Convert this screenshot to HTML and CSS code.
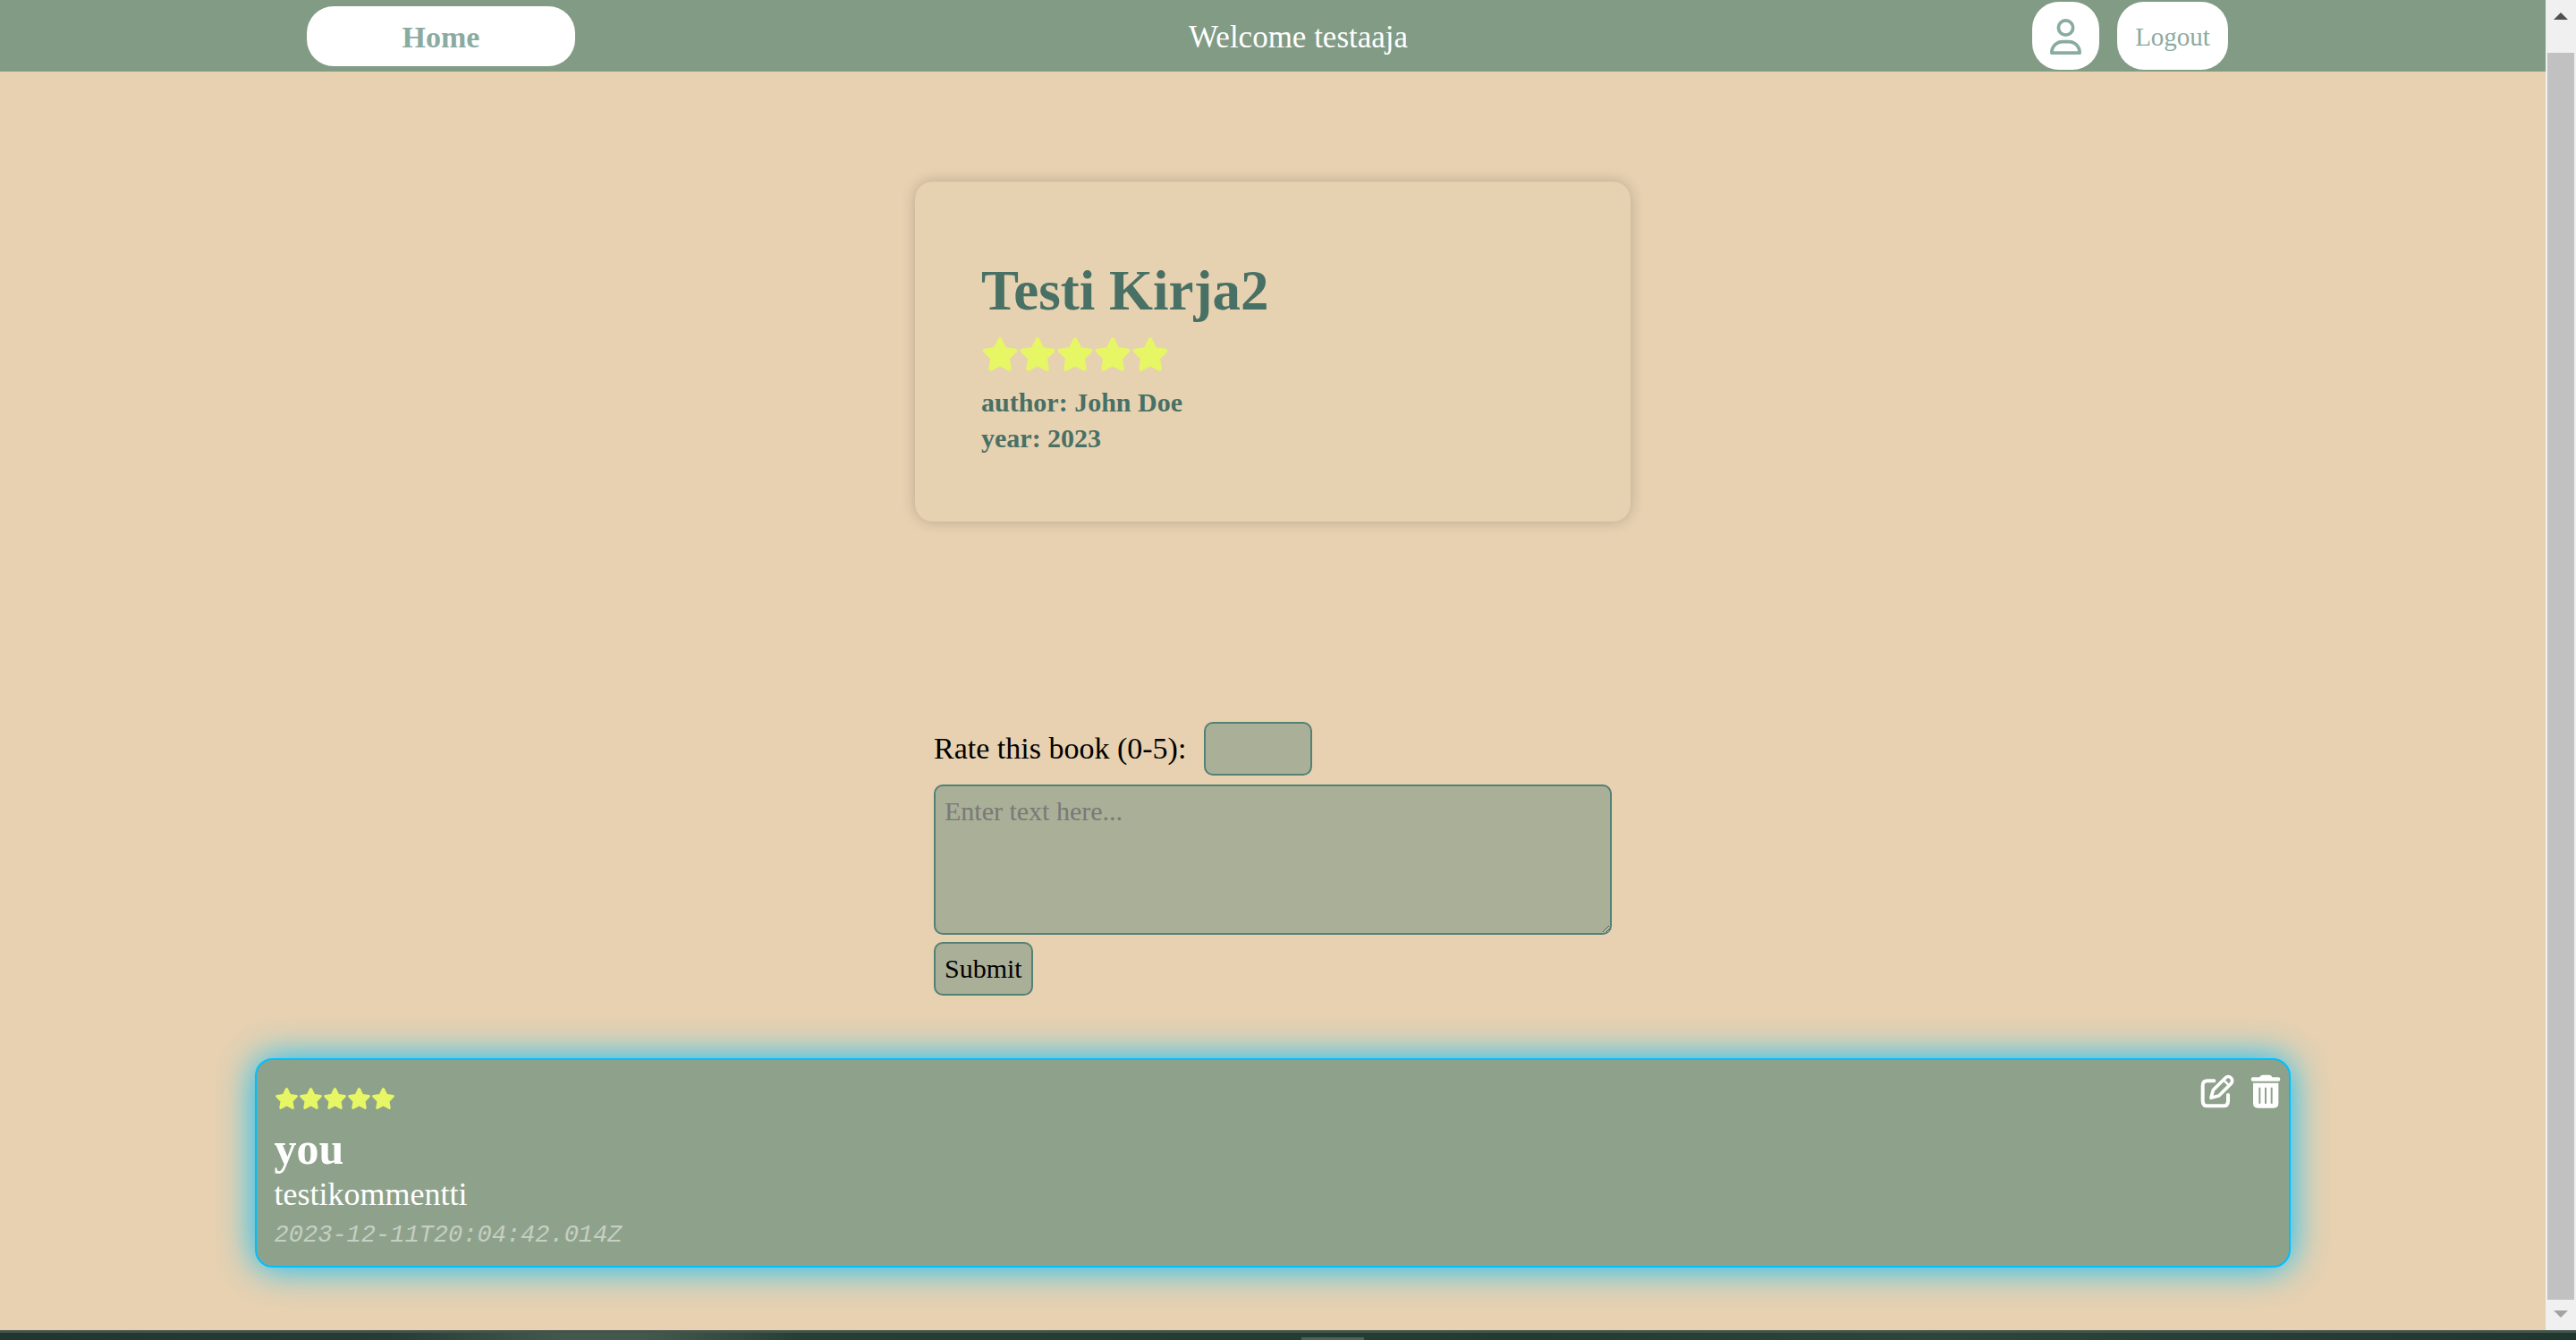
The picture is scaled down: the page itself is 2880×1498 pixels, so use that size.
FILE: index.html
```html
<!DOCTYPE html>
<html lang="en">
<head>
<meta charset="utf-8">
<title>Testi Kirja2</title>
<link rel="stylesheet" href="styles.css">
</head>
<body>
<svg class="sprite" aria-hidden="true">
  <symbol id="star" viewBox="0 0 576 512"><path d="M316.9 18C311.6 7 300.4 0 288.1 0s-23.4 7-28.8 18L195 150.3 51.4 171.5c-12 1.8-22 10.2-25.7 21.7s-.7 24.2 7.9 32.7L137.8 329 113.2 474.7c-2 12 3 24.2 12.9 31.3s23 8 33.8 2.3l128.3-68.5 128.3 68.5c10.8 5.7 23.9 4.9 33.8-2.3s14.9-19.3 12.9-31.3L438.5 329 542.7 225.9c8.6-8.5 11.7-21.2 7.9-32.7s-13.7-19.9-25.7-21.7L381.2 150.3 316.9 18z"/></symbol>
</svg>
<div class="window">
  <div class="page">
    <header class="navbar">
      <button class="nav-button home" type="button">Home</button>
      <span class="welcome">Welcome testaaja</span>
      <div class="nav-actions">
        <button class="nav-button profile" type="button" aria-label="Profile">
          <svg class="profile-icon" viewBox="0 0 448 512"><path d="M304 128a80 80 0 1 0 -160 0 80 80 0 1 0 160 0zM96 128a128 128 0 1 1 256 0A128 128 0 1 1 96 128zM49.3 464H398.7c-8.9-63.3-63.3-112-129-112H178.3c-65.7 0-120.1 48.7-129 112zM0 482.3C0 383.8 79.8 304 178.3 304h91.4C368.2 304 448 383.8 448 482.3c0 16.4-13.3 29.7-29.7 29.7H29.7C13.3 512 0 498.7 0 482.3z"/></svg>
        </button>
        <button class="nav-button logout" type="button">Logout</button>
      </div>
    </header>
    <main class="content">
      <section class="book">
        <h1 class="book-title">Testi Kirja2</h1>
        <div class="stars" role="img" aria-label="5 out of 5">
          <svg><use href="#star"/></svg><svg><use href="#star"/></svg><svg><use href="#star"/></svg><svg><use href="#star"/></svg><svg><use href="#star"/></svg>
        </div>
        <p class="book-info">author: John Doe</p>
        <p class="book-info">year: 2023</p>
      </section>
      <form class="review">
        <div class="rate">
          <label for="rating">Rate this book (0-5):</label>
          <input class="field rating" id="rating" type="number" min="0" max="5">
        </div>
        <textarea class="field review-text" placeholder="Enter text here..." aria-label="Review"></textarea>
        <button class="field submit" type="submit">Submit</button>
      </form>
      <article class="comment">
        <div class="comment-body">
          <div class="stars small" role="img" aria-label="5 out of 5">
            <svg><use href="#star"/></svg><svg><use href="#star"/></svg><svg><use href="#star"/></svg><svg><use href="#star"/></svg><svg><use href="#star"/></svg>
          </div>
          <h2 class="comment-author">you</h2>
          <p class="comment-text">testikommentti</p>
          <time class="comment-date">2023-12-11T20:04:42.014Z</time>
        </div>
        <div class="comment-actions">
          <button class="icon-button" type="button" aria-label="Edit">
            <svg class="edit-icon" viewBox="122 122 114 114" fill="none" stroke="#fff" stroke-linecap="round" stroke-linejoin="round">
              <path stroke-width="12" d="M168 144H146Q130 144 130 160V211Q130 228 147 228H199Q215 228 215 211V191"/>
              <path stroke-width="11" d="M158 201L165 175L206 134A12 12 0 0 1 225 153L184 194Z"/>
              <path stroke-width="8" d="M201 142L218 159"/>
            </svg>
          </button>
          <button class="icon-button" type="button" aria-label="Delete">
            <svg class="trash-icon" viewBox="290 121 102 114" fill="#fff">
              <path d="M298 131H321Q323 123 332 123H352Q361 123 363 131H385Q390 132 390 138Q390 144 384 144H298Q292 144 292 138Q292 131 298 131Z"/>
              <path fill-rule="evenodd" d="M299 150H384V218Q384 234 368 234H315Q299 234 299 218ZM318 165V219H324V165ZM338 165V219H344V165ZM358 165V219H364V165Z"/>
            </svg>
          </button>
        </div>
      </article>
    </main>
  </div>
  <div class="scrollbar" aria-hidden="true">
    <svg class="arrow up" viewBox="0 0 16 8"><path d="M8 0L16 8H0Z"/></svg>
    <div class="thumb"></div>
    <svg class="arrow down" viewBox="0 0 16 8"><path d="M0 0H16L8 8Z"/></svg>
  </div>
</div>
<footer class="taskbar"><span class="taskbar-mark"></span></footer>
</body>
</html>
```
FILE: styles.css
```css
* {
  box-sizing: border-box;
}

body {
  margin: 0;
  min-height: 100vh;
  display: flex;
  flex-direction: column;
  background: #e7d1b1;
  font-family: "Liberation Serif", serif;
}

h1, h2, p {
  margin: 0;
}

button, input, textarea {
  font-family: inherit;
}

.sprite {
  display: none;
}

.window {
  flex: 1;
  display: flex;
}

.page {
  flex: 1;
}

/* Navigation */
.navbar {
  height: 80px;
  display: flex;
  align-items: center;
  justify-content: space-around;
  background: #819b85;
}

.nav-button {
  border: 0;
  border-radius: 30px;
  background: #fff;
  color: #8aaba1;
}

.home {
  width: 300px;
  height: 67px;
  padding: 4px 0 0;
  font-size: 34px;
  font-weight: bold;
}

.welcome {
  padding-top: 4px;
  font-size: 35px;
  color: #fff;
}

.nav-actions {
  display: flex;
  gap: 20px;
  padding: 0 12px;
}

.profile,
.logout {
  height: 76px;
  padding: 2px 20px 0;
  display: flex;
  align-items: center;
  font-size: 29px;
}

.profile-icon {
  width: 35px;
  height: 40px;
  fill: #8aaba1;
}

/* Content */
.content {
  display: flex;
  flex-direction: column;
  align-items: center;
  padding: 123px 0 70px;
}

.book {
  width: 800px;
  padding: 74px 74px 73px;
  border-radius: 20px;
  background: #e6d2b1;
  box-shadow: 0 0 16px rgba(0, 0, 0, 0.2);
  color: #497065;
}

.book-title {
  font-size: 63px;
  line-height: 96px;
}

.stars {
  display: flex;
  padding: 4px 0 15px;
  fill: #e6f665;
}

.stars svg {
  width: 42px;
  height: 38px;
}

.book-info {
  font-size: 30px;
  line-height: 40px;
  font-weight: bold;
}

/* Review form */
.review {
  width: 758px;
  margin-top: 224px;
  display: flex;
  flex-direction: column;
  align-items: flex-start;
  gap: 8px;
}

.rate {
  display: flex;
  align-items: center;
  gap: 20px;
  margin-bottom: 2px;
  font-size: 34px;
}

.field {
  border: 2px solid #528175;
  border-radius: 10px;
  background: #aaaf97;
  color: #000;
  font-size: 30px;
  padding: 10px;
}

.rating {
  width: 121px;
  height: 60px;
}

.review-text {
  width: 100%;
  height: 168px;
  line-height: 36px;
}

.review-text::placeholder {
  color: #777a78;
}

.submit {
  height: 60px;
}

/* Comment */
.comment {
  width: 80%;
  margin-top: 70px;
  display: flex;
  justify-content: space-between;
  align-items: flex-start;
  border: 2px solid #00bfff;
  border-radius: 20px;
  background: #8ea28b;
  box-shadow: 0 0 40px #00bfff;
  color: #fff;
}

.comment-body {
  display: flex;
  flex-direction: column;
  padding: 31px 20px 9px;
}

.small {
  padding: 0 0 14px;
}

.small svg {
  width: 27px;
  height: 24px;
}

.comment-author {
  font-size: 50px;
  line-height: 60px;
}

.comment-text {
  font-size: 36px;
  line-height: 42px;
}

.comment-date {
  font-family: "Liberation Mono", monospace;
  font-size: 27px;
  line-height: 50px;
  font-style: italic;
  color: #c5cfc2;
}

.comment-actions {
  display: flex;
  gap: 18px;
  padding: 16px 9px;
}

.icon-button {
  display: flex;
  padding: 0;
  border: 0;
  background: none;
}

.edit-icon {
  width: 38px;
  height: 38px;
}

.trash-icon {
  width: 34px;
  height: 38px;
}

/* Scrollbar */
.scrollbar {
  width: 34px;
  display: flex;
  flex-direction: column;
  align-items: center;
  background: #f0f0f0;
}

.arrow {
  width: 16px;
  height: 8px;
}

.up {
  margin: 14px 0 37px;
  fill: #505050;
}

.thumb {
  flex: 1;
  width: 30px;
  background: #c1c1c1;
}

.down {
  margin: 12px 0 14px;
  fill: #a3a3a3;
}

/* Taskbar edge */
.taskbar {
  height: 11px;
  display: flex;
  justify-content: center;
  align-items: flex-end;
  padding-left: 100px;
  border-top: 3px solid #43534c;
  background: linear-gradient(90deg, #20362f, #263c34 15%, #43594e 22%, #43594e 25%, #263f35 31%, #233c32 60%, #2c463b 75%, #20372f);
}

.taskbar-mark {
  width: 70px;
  height: 3px;
  background: #4e6259;
}
```
